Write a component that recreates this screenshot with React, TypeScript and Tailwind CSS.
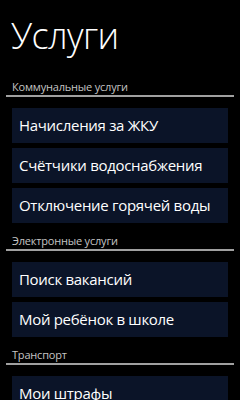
import React from 'react';

const sections = [
  {
    title: 'Коммунальные услуги',
    items: ['Начисления за ЖКУ', 'Счётчики водоснабжения', 'Отключение горячей воды'],
  },
  {
    title: 'Электронные услуги',
    items: ['Поиск вакансий', 'Мой ребёнок в школе'],
  },
  {
    title: 'Транспорт',
    items: ['Мои штрафы'],
  },
];

export default function App() {
  return (
    <div
      className="w-[240px] h-[400px] bg-black text-white overflow-hidden"
      style={{ fontFamily: '"Open Sans", "Noto Sans", sans-serif' }}
    >
      <h1 className="pl-[11px] pt-[14px] text-[36px] leading-[44px] font-light tracking-[-0.6px]">
        Услуги
      </h1>
      <div className="mt-[22px] flex flex-col">
        {sections.map((section) => (
          <div key={section.title} className="mb-[11px]">
            <div className="px-[6px]">
              <p className="pl-[6px] text-[11px] leading-[14px] text-[#c4c4c4] tracking-[-0.2px]">
                {section.title}
              </p>
              <div className="h-[2px] bg-[#a0a0a0] mt-[1px]" />
            </div>
            <div className="mt-[11px] flex flex-col gap-[5px] px-[12px]">
              {section.items.map((item) => (
                <div
                  key={item}
                  className="h-[35px] bg-[#0b1428] flex items-center pl-[7px] text-[15px] tracking-[-0.3px] text-white whitespace-nowrap"
                >
                  {item}
                </div>
              ))}
            </div>
          </div>
        ))}
      </div>
    </div>
  );
}
